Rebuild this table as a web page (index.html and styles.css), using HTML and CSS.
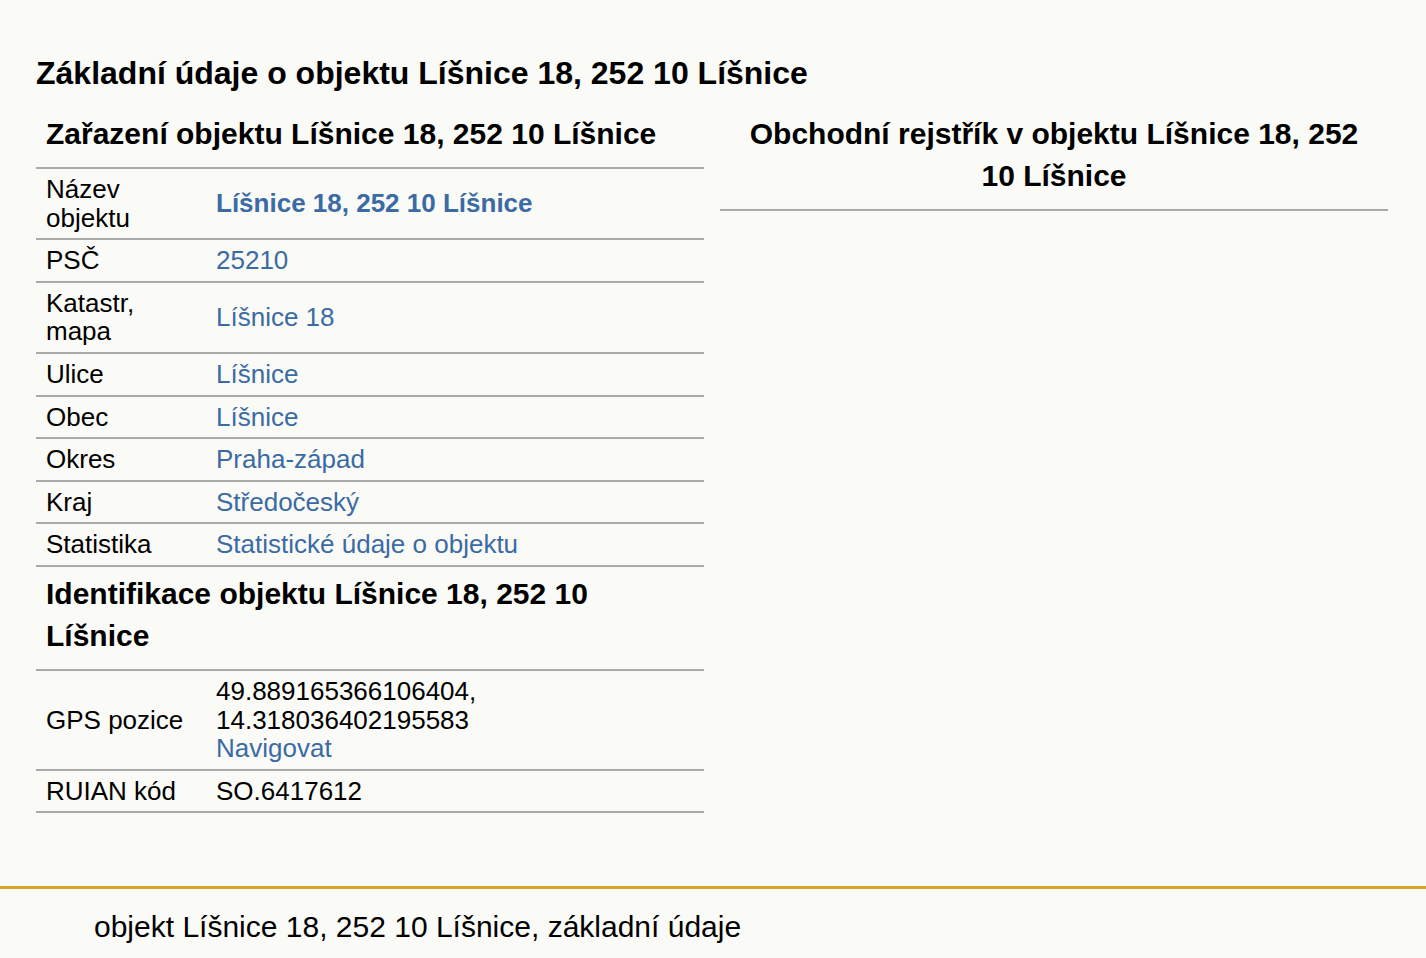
FILE: index.html
```html
<!DOCTYPE html>
<html lang="cs">
<head>
    <meta charset="UTF-8">
    <meta name="viewport" content="width=device-width, initial-scale=1.0">
    <title>Líšnice 18, 252 10 Líšnice - základní údaje</title>
    <link rel="stylesheet" href="styles.css">
</head>
<body>
    <div class="page">
        <h1>Základní údaje o objektu Líšnice 18, 252 10 Líšnice</h1>

        <div class="columns">
            <div class="column">
                <h2>Zařazení objektu Líšnice 18, 252 10 Líšnice</h2>
                <table class="info">
                    <colgroup>
                        <col class="col-label">
                        <col>
                    </colgroup>
                    <tr>
                        <td>Název objektu</td>
                        <td><a href="#" class="strong">Líšnice 18, 252 10 Líšnice</a></td>
                    </tr>
                    <tr>
                        <td>PSČ</td>
                        <td><a href="#">25210</a></td>
                    </tr>
                    <tr>
                        <td>Katastr, mapa</td>
                        <td><a href="#">Líšnice 18</a></td>
                    </tr>
                    <tr>
                        <td>Ulice</td>
                        <td><a href="#">Líšnice</a></td>
                    </tr>
                    <tr>
                        <td>Obec</td>
                        <td><a href="#">Líšnice</a></td>
                    </tr>
                    <tr>
                        <td>Okres</td>
                        <td><a href="#">Praha-západ</a></td>
                    </tr>
                    <tr>
                        <td>Kraj</td>
                        <td><a href="#">Středočeský</a></td>
                    </tr>
                    <tr>
                        <td>Statistika</td>
                        <td><a href="#">Statistické údaje o objektu</a></td>
                    </tr>
                </table>

                <h2 class="sub">Identifikace objektu Líšnice 18, 252 10 Líšnice</h2>
                <table class="info">
                    <colgroup>
                        <col class="col-label">
                        <col>
                    </colgroup>
                    <tr>
                        <td>GPS pozice</td>
                        <td>49.889165366106404, 14.318036402195583<br><a href="#">Navigovat</a></td>
                    </tr>
                    <tr>
                        <td>RUIAN kód</td>
                        <td>SO.6417612</td>
                    </tr>
                </table>
            </div>

            <div class="column">
                <h2 class="centered">Obchodní rejstřík v objektu Líšnice 18, 252 10 Líšnice</h2>
            </div>
        </div>
    </div>

    <footer class="footer">
        <p>objekt Líšnice 18, 252 10 Líšnice, základní údaje</p>
    </footer>
</body>
</html>
```

FILE: styles.css
```css
body {
    margin: 0;
    font-family: 'Liberation Sans', Arial, sans-serif;
    color: #000;
    background-color: #fafaf7;
}
.page {
    padding: 0 38px 0 36px;
}
h1 {
    font-size: 32px;
    line-height: 37px;
    margin: 55px 0 16px;
}
.columns {
    display: grid;
    grid-template-columns: 1fr 1fr;
    gap: 16px;
}
h2 {
    font-size: 30px;
    line-height: 42px;
    margin: 0;
    padding: 5px 10px 12px;
    border-bottom: 2px solid #aaaaaa;
}
h2.sub {
    padding-top: 6px;
}
h2.centered {
    text-align: center;
}
.info {
    width: 100%;
    border-collapse: collapse;
    table-layout: fixed;
    font-size: 26px;
    line-height: 1.1;
}
.col-label {
    width: 170px;
}
.info td {
    padding: 6px 10px;
    border-bottom: 2px solid #aaaaaa;
    vertical-align: middle;
}
a {
    color: #3b6ba4;
    text-decoration: none;
}
a.strong {
    font-weight: bold;
}
.footer {
    margin-top: 73px;
    border-top: 3px solid #d8a426;
    padding: 21px 0 0 94px;
}
.footer p {
    margin: 0;
    font-size: 30px;
    line-height: 34px;
}
```
